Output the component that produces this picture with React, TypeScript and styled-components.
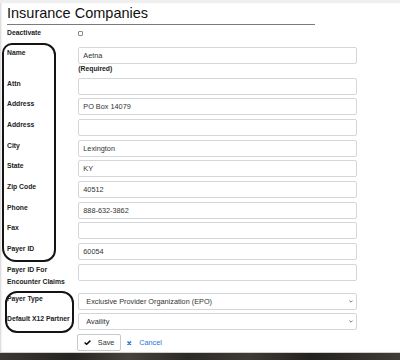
import React from "react";
import styled, {createGlobalStyle} from "styled-components";

const GlobalStyle = createGlobalStyle`
    html, body {
        margin: 0;
        padding: 0;
        background: #2f2d2a;
    }
    body {
        font-family: "Liberation Sans", Arial, sans-serif;
    }
`;

const Page = styled.div`
    width: 400px;
    height: 360px;
    display: flex;
    flex-direction: column;
    overflow: hidden;
`;

const Panel = styled.div`
    position: relative;
    height: 352px;
    box-sizing: border-box;
    border-top: 3px solid #efefef;
    background: #fff;
    overflow: hidden;
    box-shadow: inset 2px 0 2px -1px rgba(0, 0, 0, 0.18);
`;

const Backdrop = styled.div`
    flex: 1;
    border-top: 1px solid #cfcfcf;
    background: linear-gradient(90deg, #3a3734 0%, #262422 18%, #46423d 32%, #2b2927 47%, #3e3a36 62%, #23211f 78%, #403c38 100%);
`;

const Title = styled.h1`
    margin: 0.6px 0 2px 7px;
    width: 308px;
    padding-bottom: 2.4px;
    border-bottom: 1.7px solid #7b7b7b;
    font-size: 14.5px;
    line-height: 18px;
    font-weight: normal;
    color: #111;
`;

const Form = styled.div`
    padding-left: 7px;
`;

const Row = styled.div<{ $space?: number }>`
    display: grid;
    grid-template-columns: 71.3px 279px;
    align-items: start;
    margin-bottom: ${({$space}) => ($space ?? 3.7)}px;
`;

const Label = styled.div<{ $padBottom?: number }>`
    font-size: 6.8px;
    line-height: 11.8px;
    font-weight: 700;
    color: #222;
    padding-bottom: ${({$padBottom}) => $padBottom ?? 0}px;
`;

const Field = styled.div`
    display: flex;
    flex-direction: column;
`;

const Input = styled.div`
    height: 17px;
    box-sizing: border-box;
    border: 1px solid #d3d6da;
    border-radius: 2px;
    padding: 0 4px;
    display: flex;
    align-items: center;
    font-size: 7.3px;
    color: #333;
`;

const Select = styled(Input)`
    position: relative;
    padding-left: 7px;
`;

const Chevron = styled.svg`
    position: absolute;
    right: 3.5px;
    top: 50%;
    margin-top: -1.5px;
`;

const Note = styled.div`
    font-size: 6.8px;
    line-height: 9.9px;
    font-weight: 700;
    color: #222;
`;

const Check = styled.span`
    display: block;
    margin-top: 4px;
    width: 5px;
    height: 5px;
    box-sizing: border-box;
    border: 1px solid #8a8a8a;
    border-radius: 1px;
`;

const Actions = styled.div`
    display: flex;
    align-items: center;
    margin-top: 0.3px;
    margin-left: -1px;
`;

const SaveButton = styled.button`
    height: 17px;
    box-sizing: border-box;
    border: 1px solid #c9c9c9;
    border-radius: 2px;
    background: #fff;
    padding: 0 6px 0 5.5px;
    display: flex;
    align-items: center;
    gap: 7px;
    font-family: inherit;
    font-size: 7.3px;
    color: #333;
`;

const CancelLink = styled.a`
    margin-left: 5.7px;
    display: flex;
    align-items: center;
    gap: 7.6px;
    font-size: 7.3px;
    color: #2673d9;
    text-decoration: none;
`;

const Annotation = styled.div<{ $radius: string }>`
    position: absolute;
    box-sizing: border-box;
    border: 2px solid #141414;
    border-radius: ${({$radius}) => $radius};
    pointer-events: none;
`;

const fields: { label: string; value?: string }[] = [
    {label: "Attn"},
    {label: "Address", value: "PO Box 14079"},
    {label: "Address"},
    {label: "City", value: "Lexington"},
    {label: "State", value: "KY"},
    {label: "Zip Code", value: "40512"},
    {label: "Phone", value: "888-632-3862"},
    {label: "Fax"},
    {label: "Payer ID", value: "60054"},
];

const selects = [
    {label: "Payer Type", value: "Exclusive Provider Organization (EPO)"},
    {label: "Default X12 Partner", value: "Availity"},
];

const App = () => {
    return (
        <Page>
            <GlobalStyle/>
            <Panel>
                <Title>Insurance Companies</Title>
                <Form>
                    <Row $space={8.2}>
                        <Label>Deactivate</Label>
                        <Check/>
                    </Row>
                    <Row>
                        <Label>Name</Label>
                        <Field>
                            <Input>Aetna</Input>
                            <Note>(Required)</Note>
                        </Field>
                    </Row>
                    {fields.map((f, i) => (
                        <Row key={i}>
                            <Label>{f.label}</Label>
                            <Input>{f.value || ""}</Input>
                        </Row>
                    ))}
                    <Row>
                        <Label $padBottom={1.7}>
                            Payer ID For
                            <br/>
                            Encounter Claims
                        </Label>
                        <Input/>
                    </Row>
                    {selects.map((s, i) => (
                        <Row key={i}>
                            <Label>{s.label}</Label>
                            <Select>
                                {s.value}
                                <Chevron width="4" height="3" viewBox="0 0 4 3">
                                    <path d="M0.4 0.6 L2 2.2 L3.6 0.6" fill="none" stroke="#555" strokeWidth="0.8"/>
                                </Chevron>
                            </Select>
                        </Row>
                    ))}
                    <Row>
                        <span/>
                        <Actions>
                            <SaveButton>
                                <svg width="7" height="5" viewBox="0 0 7 5">
                                    <path d="M0.6 2.5 L2.6 4.3 L6.4 0.6" fill="none" stroke="#111" strokeWidth="1.5"/>
                                </svg>
                                Save
                            </SaveButton>
                            <CancelLink href="#">
                                <svg width="4.5" height="4.5" viewBox="0 0 4.5 4.5">
                                    <path d="M0.5 0.5 L4 4 M4 0.5 L0.5 4" stroke="#2673d9" strokeWidth="1.5"/>
                                </svg>
                                Cancel
                            </CancelLink>
                        </Actions>
                    </Row>
                </Form>
                <Annotation $radius="10px 12px 12px 14px" style={{left: 2, top: 40.3, width: 54, height: 219}}/>
                <Annotation $radius="12px" style={{left: 5, top: 287.7, width: 69, height: 42}}/>
            </Panel>
            <Backdrop/>
        </Page>
    );
};

export default App;
